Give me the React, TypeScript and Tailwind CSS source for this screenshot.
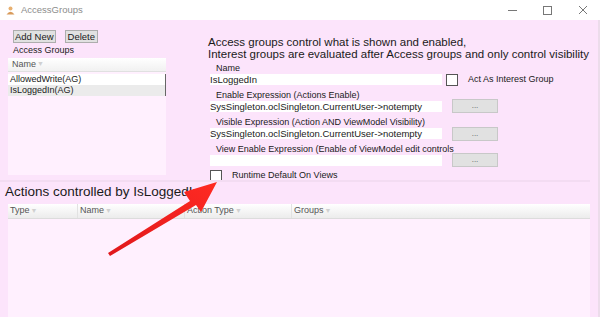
import * as React from 'react'

const font = { fontFamily: '"Liberation Sans", Arial, sans-serif' }

function FilterMark() {
  return <span className="ml-[1px] text-[7px] text-[#d0d0d0]">▼</span>
}

function DotsButton() {
  return (
    <div className="w-[46px] h-[14px] bg-[#e1e1e1] border border-[#c8c8c8] flex items-center justify-center text-[8px] text-[#555] leading-none">
      ...
    </div>
  )
}

function CheckBox() {
  return <div className="w-[12px] h-[12px] bg-white border border-[#555]" />
}

function ExprRow({ label, value, btnTop }: { label: string; value: string; btnTop: string }) {
  return (
    <div className="mt-[5px]">
      <div className="pl-[8px] text-[9px] leading-[11px]">{label}</div>
      <div className="flex items-start pl-[2px] h-[11px]">
        <div className="w-[232px] h-[11px] bg-white text-[9.5px] leading-[11px]">{value}</div>
        <div className={'ml-[10px] ' + btnTop}><DotsButton /></div>
      </div>
    </div>
  )
}

export default function App() {
  return (
    <div className="relative w-[600px] h-[317px] overflow-hidden bg-white text-[#1a1a1a]" style={font}>
      {/* title bar */}
      <div className="h-[20px] flex items-center bg-white">
        <svg className="ml-[6px] mr-[6px]" width="9" height="9" viewBox="0 0 9 9">
          <circle cx="4.5" cy="2.5" r="2" fill="#e8b070" />
          <path d="M0.5 8.5 Q4.5 3 8.5 8.5 Z" fill="#d89a5a" />
        </svg>
        <span className="text-[9.5px] text-[#8c8c8c]">AccessGroups</span>
        <div className="ml-auto flex items-center h-full">
          <div className="w-[35px] flex justify-center"><div className="w-[9px] h-px bg-[#777]" /></div>
          <div className="w-[35px] flex justify-center"><div className="w-[9px] h-[9px] border border-[#777]" /></div>
          <div className="w-[35px] flex justify-center">
            <svg width="10" height="10" viewBox="0 0 10 10"><path d="M1 1 L9 9 M9 1 L1 9" stroke="#777" strokeWidth="1" /></svg>
          </div>
        </div>
      </div>

      {/* window body */}
      <div className="h-[297px] bg-[#fce4fb] border-r-2 border-[#ecdceb] flex flex-col">
        <div className="h-[160px] flex">
          {/* left panel */}
          <div className="w-[200px] pl-[8px] pt-[10px]">
            <div className="flex gap-[9px] pl-[5px]">
              <div className="h-[13px] px-[1px] bg-[#e1e1e1] border border-[#adadad] text-[9.5px] leading-[11px]">Add New</div>
              <div className="h-[13px] px-[2px] bg-[#e1e1e1] border border-[#adadad] text-[9.5px] leading-[11px]">Delete</div>
            </div>
            <div className="pl-[5px] mt-[2px] text-[9px] leading-[11px]">Access Groups</div>
            <div className="mt-[2px] w-[158px] h-[117px] bg-[#fff0fe] flex flex-col">
              <div className="h-[14px] bg-gradient-to-b from-white to-[#f1f1f1] border-b border-[#e0e0e0] flex items-center pl-[4px] text-[9px] text-[#555]">
                Name<FilterMark />
              </div>
              <div className="mt-[2px] h-[11px] bg-white border-r border-[#666] pl-[2px] text-[9px] leading-[11px]">AllowedWrite(AG)</div>
              <div className="h-[11px] bg-[#ebebeb] border-r border-[#666] pl-[2px] text-[9px] leading-[11px]">IsLoggedIn(AG)</div>
            </div>
          </div>

          {/* right panel */}
          <div className="flex-1 pl-[8px] pt-[16px]">
            <div className="text-[11.5px] leading-[12px]">
              Access groups control what is shown and enabled,<br />
              Interest groups are evaluated after Access groups and only control visibility
            </div>
            <div className="pl-[8px] mt-[3px] text-[9px] leading-[11px]">Name</div>
            <div className="flex items-center pl-[2px] h-[11px]">
              <div className="w-[232px] h-[11px] bg-white text-[9.5px] leading-[11px]">IsLoggedIn</div>
              <div className="ml-[4px]"><CheckBox /></div>
              <div className="ml-[10px] text-[9px]">Act As Interest Group</div>
            </div>
            <ExprRow label="Enable Expression (Actions Enable)" value="SysSingleton.oclSingleton.CurrentUser->notempty" btnTop="-mt-[2px]" />
            <ExprRow label="Visible Expression (Action AND ViewModel Visibility)" value="SysSingleton.oclSingleton.CurrentUser->notempty" btnTop="-mt-[1px]" />
            <ExprRow label="View Enable Expression (Enable of ViewModel edit controls" value="" btnTop="-mt-[2px]" />
            <div className="flex items-center pl-[2px] mt-[3px]">
              <CheckBox />
              <div className="ml-[10px] text-[9px]">Runtime Default On Views</div>
            </div>
          </div>
        </div>

        <div className="mr-[8px] h-[2px] bg-[#f3dcf2]" />

        {/* actions section */}
        <div className="pl-[5px] mt-[1px] text-[13.5px] leading-[18px]">Actions controlled by IsLoggedIn</div>
        <div className="ml-[8px] mr-[8px] mt-[3px] flex-1 bg-[#fff0fe] flex flex-col">
          <div className="h-[15px] bg-gradient-to-b from-white to-[#ececec] border-b border-[#dcdcdc] flex text-[9px] text-[#555]">
            <div className="w-[70px] pl-[2px] flex items-center border-r border-[#e2e2e2]">Type<FilterMark /></div>
            <div className="w-[107px] pl-[2px] flex items-center border-r border-[#e2e2e2]">Name<FilterMark /></div>
            <div className="w-[107px] pl-[2px] flex items-center border-r border-[#e2e2e2]">Action Type<FilterMark /></div>
            <div className="flex-1 pl-[2px] flex items-center">Groups<FilterMark /></div>
          </div>
        </div>
      </div>

      {/* annotation arrow */}
      <svg className="absolute left-0 top-0 pointer-events-none" width="600" height="317" viewBox="0 0 600 317">
        <defs>
          <linearGradient id="ar" x1="0" y1="1" x2="1" y2="0">
            <stop offset="0" stopColor="#e0181c" />
            <stop offset="1" stopColor="#ff2a22" />
          </linearGradient>
        </defs>
        <polygon points="108,253 190,201 184,192 217,182 201,212 196,205 110,256" fill="url(#ar)" />
      </svg>
    </div>
  )
}
